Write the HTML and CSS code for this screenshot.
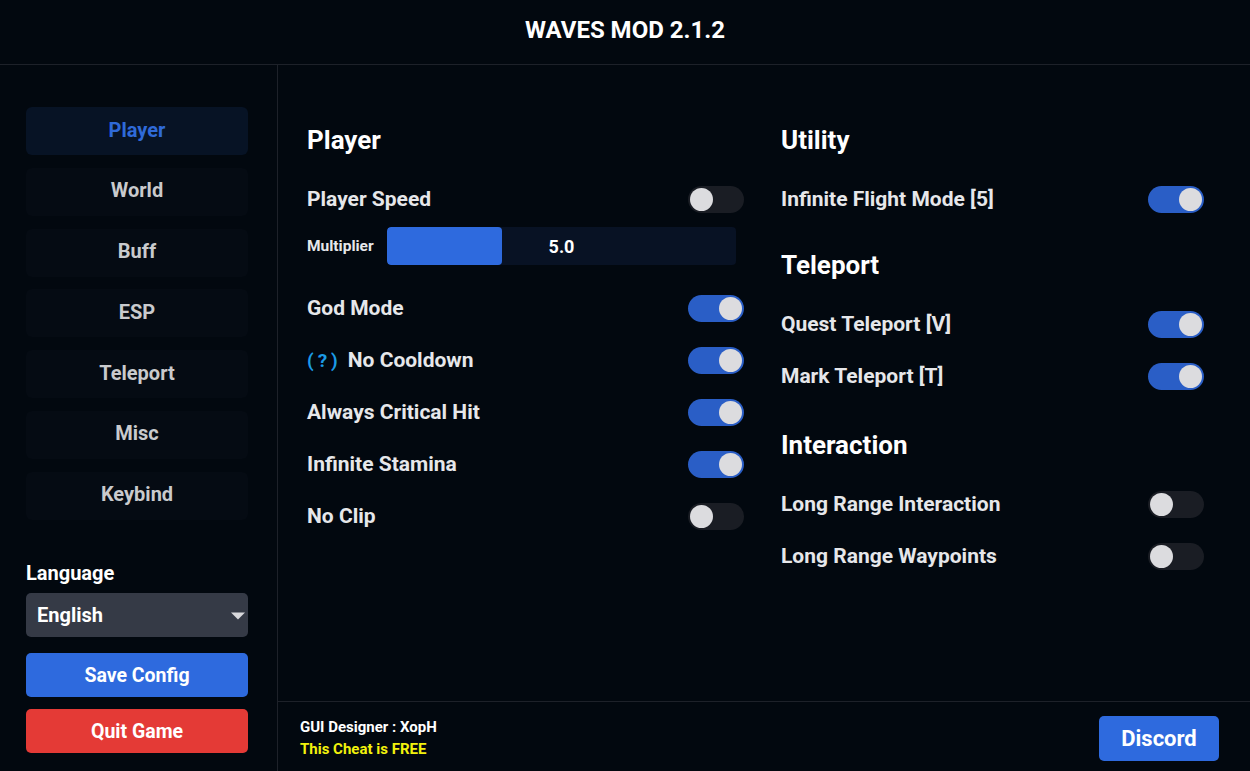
FILE: index.html
```html
<!DOCTYPE html>
<html lang="en">
<head>
<meta charset="utf-8">
<title>WAVES MOD 2.1.2</title>
<link rel="stylesheet" href="styles.css">
</head>
<body>
<div class="app">
  <header class="topbar">WAVES MOD 2.1.2</header>
  <div class="body">
    <aside class="sidebar">
      <nav class="nav">
        <div class="nav-item active">Player</div>
        <div class="nav-item">World</div>
        <div class="nav-item">Buff</div>
        <div class="nav-item">ESP</div>
        <div class="nav-item">Teleport</div>
        <div class="nav-item">Misc</div>
        <div class="nav-item">Keybind</div>
      </nav>
      <div class="side-bottom">
        <div class="lang-label">Language</div>
        <div class="select">
          <span>English</span>
          <svg class="caret" width="16" height="8" viewBox="0 0 16 8"><path d="M1 0.5 H15 L8 7.5 Z" fill="#d8d8dc"/></svg>
        </div>
        <div class="btn btn-blue">Save Config</div>
        <div class="btn btn-red">Quit Game</div>
      </div>
    </aside>
    <main class="main">
      <div class="content">
        <section class="col col-left">
          <h2 class="heading">Player</h2>
          <div class="row"><span class="label">Player Speed</span><span class="toggle"></span></div>
          <div class="slider-row">
            <span class="slider-label">Multiplier</span>
            <div class="slider">
              <div class="slider-fill" style="width:33%"></div>
              <span class="slider-value">5.0</span>
            </div>
          </div>
          <div class="row first-after-slider"><span class="label">God Mode</span><span class="toggle on"></span></div>
          <div class="row"><span class="label"><span class="help">(?)</span>No Cooldown</span><span class="toggle on"></span></div>
          <div class="row"><span class="label">Always Critical Hit</span><span class="toggle on"></span></div>
          <div class="row"><span class="label">Infinite Stamina</span><span class="toggle on"></span></div>
          <div class="row"><span class="label">No Clip</span><span class="toggle"></span></div>
        </section>
        <section class="col col-right">
          <h2 class="heading">Utility</h2>
          <div class="row"><span class="label">Infinite Flight Mode [5]</span><span class="toggle on"></span></div>
          <h2 class="heading sub sub-teleport">Teleport</h2>
          <div class="row"><span class="label">Quest Teleport [V]</span><span class="toggle on"></span></div>
          <div class="row"><span class="label">Mark Teleport [T]</span><span class="toggle on"></span></div>
          <h2 class="heading sub sub-interaction">Interaction</h2>
          <div class="row"><span class="label">Long Range Interaction</span><span class="toggle"></span></div>
          <div class="row"><span class="label">Long Range Waypoints</span><span class="toggle"></span></div>
        </section>
      </div>
      <footer class="footer">
        <div class="credits">
          <div class="credit-line">GUI Designer : XopH</div>
          <div class="credit-line free">This Cheat is FREE</div>
        </div>
        <div class="discord">Discord</div>
      </footer>
    </main>
  </div>
</div>
</body>
</html>
```

FILE: styles.css
```css
* { box-sizing: border-box; }
html, body { margin: 0; padding: 0; }
body {
  background: #02080f;
  color: #e6e7ea;
  font-family: Roboto, "Liberation Sans", sans-serif;
  font-weight: 700;
  width: 1250px;
  height: 771px;
  overflow: hidden;
}
.app { display: flex; flex-direction: column; height: 771px; }
.topbar {
  height: 65px;
  border-bottom: 1px solid #1d2129;
  display: flex;
  align-items: center;
  justify-content: center;
  font-size: 24px;
  color: #ffffff;
  padding-bottom: 4px;
}
.body { flex: 1; display: flex; min-height: 0; }
.sidebar {
  width: 278px;
  border-right: 1px solid #1d2129;
  padding: 42px 29px 18px 26px;
  display: flex;
  flex-direction: column;
}
.nav { display: flex; flex-direction: column; gap: 12.8px; }
.nav-item {
  height: 48px;
  border-radius: 6px;
  background: #050b13;
  color: #c9cacd;
  font-size: 20px;
  display: flex;
  align-items: center;
  justify-content: center;
  padding-bottom: 3px;
}
.nav-item.active { background: #071325; color: #2f6ad8; }
.side-bottom { margin-top: auto; display: flex; flex-direction: column; }
.lang-label { font-size: 20px; color: #ffffff; line-height: 22px; margin-bottom: 9px; }
.select {
  height: 44px;
  background: #353a46;
  border-radius: 5px;
  display: flex;
  align-items: center;
  justify-content: space-between;
  padding: 0 2px 0 11px;
  font-size: 20px;
  color: #ffffff;
  margin-bottom: 16px;
}
.caret { margin-top: 1px; }
.btn {
  height: 44px;
  border-radius: 5px;
  display: flex;
  align-items: center;
  justify-content: center;
  font-size: 19.5px;
  color: #ffffff;
}
.btn-blue { background: #2e6ade; margin-bottom: 12px; }
.btn-red { background: #e43a36; }
.main { flex: 1; display: flex; flex-direction: column; min-width: 0; }
.content {
  flex: 1;
  display: flex;
  gap: 37px;
  padding: 59px 46px 0 29px;
}
.col { display: flex; flex-direction: column; }
.col-left { width: 437px; }
.col-right { width: 423px; }
.heading {
  margin: 0 0 16px 0;
  font-size: 26px;
  line-height: 32px;
  color: #ffffff;
  font-weight: 700;
}
.heading.sub-teleport { margin-top: 25px; }
.heading.sub-interaction { margin-top: 28px; }
.row {
  height: 52px;
  display: flex;
  align-items: center;
  justify-content: space-between;
}
.label { font-size: 21px; color: #e6e7ea; padding-top: 2px; }
.help { color: #1b9be6; letter-spacing: 4px; margin-right: 6px; font-size: 19px; }
.toggle {
  width: 56px;
  height: 27px;
  border-radius: 14px;
  background: #1a1d24;
  position: relative;
  margin-top: 2px;
}
.toggle::after {
  content: "";
  position: absolute;
  width: 23px;
  height: 23px;
  border-radius: 50%;
  background: #dcdcdf;
  top: 2px;
  left: 2px;
}
.toggle.on { background: #2a5ec6; }
.toggle.on::after { left: auto; right: 2px; }
.slider-row {
  display: flex;
  align-items: center;
  margin-top: 3px;
  height: 38px;
}
.slider-label { font-size: 15.5px; width: 80px; color: #e6e7ea; }
.slider {
  width: 349px;
  height: 38px;
  border-radius: 4px;
  background: #081224;
  position: relative;
  display: flex;
  align-items: center;
  justify-content: center;
  overflow: hidden;
}
.slider-fill {
  position: absolute;
  left: 0; top: 0; bottom: 0;
  background: #2e6ade;
  border-radius: 4px;
}
.slider-value { position: relative; font-size: 18px; color: #ffffff; }
.first-after-slider { margin-top: 16px; }
.footer {
  height: 70px;
  border-top: 1px solid #1d2129;
  display: flex;
  align-items: center;
  justify-content: space-between;
  padding: 0 31px 0 22px;
}
.credits { display: flex; flex-direction: column; margin-top: 2px; }
.credit-line { font-size: 15px; line-height: 22px; color: #ffffff; }
.credit-line.free { color: #f2f20c; }
.discord {
  width: 120px;
  height: 45px;
  border-radius: 5px;
  background: #2e6ade;
  color: #ffffff;
  font-size: 22px;
  display: flex;
  align-items: center;
  justify-content: center;
  margin-top: 3px;
}
```
